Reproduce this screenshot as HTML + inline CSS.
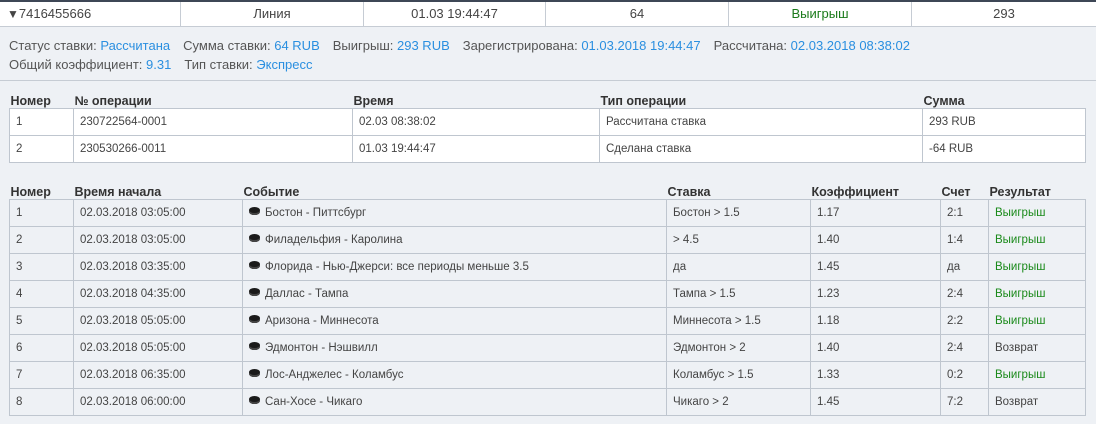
<!DOCTYPE html>
<html><head><meta charset="utf-8"><style>
*{margin:0;padding:0;box-sizing:border-box}
body{width:1096px;height:424px;background:#eef1f5;font-family:"Liberation Sans",Roboto,sans-serif;color:#444;overflow:hidden;position:relative}
.top{position:absolute;left:0;top:0;width:1096px;height:27px;background:#fff;border-top:2px solid #3e4756;border-bottom:1px solid #c6ccd4;display:flex;font-size:13px}
.top div{height:24px;line-height:24px;text-align:center;border-right:1px solid #c6ccd4}
.info{position:absolute;left:9px;top:36px;font-size:13px;color:#555;line-height:19px}
.info b{font-weight:normal;color:#2a8fe0}
.info span{margin-right:13px}
.sep{position:absolute;left:0;top:80px;width:1096px;border-top:1px solid #c6ccd4}
table{position:absolute;left:9px;border-collapse:collapse;font-size:11.5px;table-layout:fixed}
th{text-align:left;font-weight:bold;font-size:12.5px;color:#333;height:16px;padding:0 0 0 1px;vertical-align:bottom;border:none}
td{border:1px solid #bfc6cf;height:27px;padding:0 6px;color:#444}
.t1 td{background:#fff;height:27px}
.t2 td{background:#eef1f5}
.g{color:#1a8a1a}
.p{display:inline-block;width:11px;height:8px;background:#1a1a1a;border-radius:50%/40%;margin-right:5px;vertical-align:1px;box-shadow:inset 0 -2px 0 #444}
</style></head><body>
<div class="top">
<div style="width:181px;text-align:left;padding-left:7px"><span style="font-size:12px">▼</span>7416455666</div>
<div style="width:183px">Линия</div>
<div style="width:182px">01.03 19:44:47</div>
<div style="width:183px">64</div>
<div style="width:183px;color:#1a7a1a">Выигрыш</div>
<div style="width:184px;border:none">293</div>
</div>
<div class="info">
<div><span>Статус ставки: <b>Рассчитана</b></span><span>Сумма ставки: <b>64 RUB</b></span><span>Выигрыш: <b>293 RUB</b></span><span>Зарегистрирована: <b>01.03.2018 19:44:47</b></span><span>Рассчитана: <b>02.03.2018 08:38:02</b></span></div>
<div><span>Общий коэффициент: <b>9.31</b></span><span>Тип ставки: <b>Экспресс</b></span></div>
</div>
<div class="sep"></div>
<table class="t1" style="top:92px;width:1076px">
<colgroup><col style="width:64px"><col style="width:279px"><col style="width:247px"><col style="width:323px"><col style="width:163px"></colgroup>
<tr><th>Номер</th><th>№ операции</th><th>Время</th><th>Тип операции</th><th>Сумма</th></tr>
<tr><td>1</td><td>230722564-0001</td><td>02.03 08:38:02</td><td>Рассчитана ставка</td><td>293 RUB</td></tr>
<tr><td>2</td><td>230530266-0011</td><td>01.03 19:44:47</td><td>Сделана ставка</td><td>-64 RUB</td></tr>
</table>
<table class="t2" style="top:183px;width:1076px">
<colgroup><col style="width:64px"><col style="width:169px"><col style="width:424px"><col style="width:144px"><col style="width:130px"><col style="width:48px"><col style="width:97px"></colgroup>
<tr><th>Номер</th><th>Время начала</th><th>Событие</th><th>Ставка</th><th>Коэффициент</th><th>Счет</th><th>Результат</th></tr>
<tr><td>1</td><td>02.03.2018 03:05:00</td><td><i class="p"></i>Бостон - Питтсбург</td><td>Бостон &gt; 1.5</td><td>1.17</td><td>2:1</td><td class="g">Выигрыш</td></tr>
<tr><td>2</td><td>02.03.2018 03:05:00</td><td><i class="p"></i>Филадельфия - Каролина</td><td>&gt; 4.5</td><td>1.40</td><td>1:4</td><td class="g">Выигрыш</td></tr>
<tr><td>3</td><td>02.03.2018 03:35:00</td><td><i class="p"></i>Флорида - Нью-Джерси: все периоды меньше 3.5</td><td>да</td><td>1.45</td><td>да</td><td class="g">Выигрыш</td></tr>
<tr><td>4</td><td>02.03.2018 04:35:00</td><td><i class="p"></i>Даллас - Тампа</td><td>Тампа &gt; 1.5</td><td>1.23</td><td>2:4</td><td class="g">Выигрыш</td></tr>
<tr><td>5</td><td>02.03.2018 05:05:00</td><td><i class="p"></i>Аризона - Миннесота</td><td>Миннесота &gt; 1.5</td><td>1.18</td><td>2:2</td><td class="g">Выигрыш</td></tr>
<tr><td>6</td><td>02.03.2018 05:05:00</td><td><i class="p"></i>Эдмонтон - Нэшвилл</td><td>Эдмонтон &gt; 2</td><td>1.40</td><td>2:4</td><td>Возврат</td></tr>
<tr><td>7</td><td>02.03.2018 06:35:00</td><td><i class="p"></i>Лос-Анджелес - Коламбус</td><td>Коламбус &gt; 1.5</td><td>1.33</td><td>0:2</td><td class="g">Выигрыш</td></tr>
<tr><td>8</td><td>02.03.2018 06:00:00</td><td><i class="p"></i>Сан-Хосе - Чикаго</td><td>Чикаго &gt; 2</td><td>1.45</td><td>7:2</td><td>Возврат</td></tr>
</table>
</body></html>
